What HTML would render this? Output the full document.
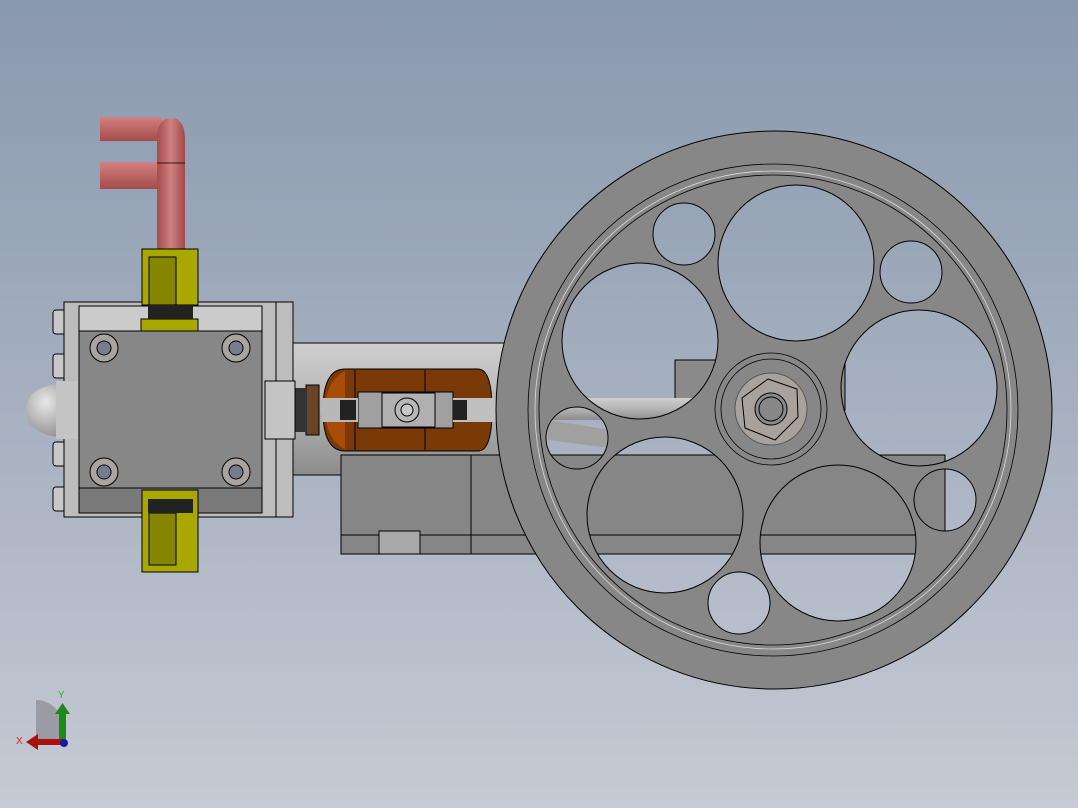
<!DOCTYPE html>
<html><head><style>
html,body{margin:0;padding:0;}
body{width:1078px;height:808px;overflow:hidden;background:linear-gradient(#8999ae 0%,#a6b0c0 50%,#c6cad4 100%);font-family:"Liberation Sans",sans-serif;}
svg{display:block;}
</style></head><body>
<svg width="1078" height="808" viewBox="0 0 1078 808" xmlns="http://www.w3.org/2000/svg">
<defs>
<linearGradient id="tube" x1="0" y1="0" x2="0" y2="1"><stop offset="0" stop-color="#cfcfcf"/><stop offset="0.5" stop-color="#b4b4b4"/><stop offset="1" stop-color="#8c8c8c"/></linearGradient>
<linearGradient id="pipe" x1="0" y1="0" x2="0" y2="1"><stop offset="0" stop-color="#d48080"/><stop offset="1" stop-color="#a44c4c"/></linearGradient>
<linearGradient id="pipev" x1="0" y1="0" x2="1" y2="0"><stop offset="0" stop-color="#a44c4c"/><stop offset="0.5" stop-color="#d08080"/><stop offset="1" stop-color="#a04a4a"/></linearGradient>
<radialGradient id="dome" cx="0.4" cy="0.35" r="0.7"><stop offset="0" stop-color="#e8e8e8"/><stop offset="1" stop-color="#8e8e8e"/></radialGradient>
</defs>
<g stroke="#000" stroke-width="1">
<rect x="100" y="117" width="62" height="24" fill="url(#pipe)" stroke="none"/>
<rect x="100" y="162" width="62" height="27" fill="url(#pipe)" stroke="none"/>
<path d="M157 250 V140 Q157 118 171 118 Q185 118 185 140 V250 Z" fill="url(#pipev)" stroke="none"/>
<line x1="157" y1="163" x2="185" y2="163" stroke-width="0.8"/>
<rect x="293" y="343" width="220" height="132" fill="url(#tube)"/>
<rect x="341" y="455" width="604" height="99" fill="#868686"/>
<line x1="341" y1="535" x2="945" y2="535"/>
<line x1="471" y1="455" x2="471" y2="554"/>
<rect x="379" y="531" width="41" height="23" fill="#a8a8a8"/>
<rect x="675" y="360" width="170" height="50" fill="#8a8a8a"/>
<rect x="490" y="398" width="215" height="22" fill="url(#tube)" stroke="none"/>
<path d="M548 420 L610 430 L610 448 L548 440 Z" fill="#a0a0a0" stroke="none"/>
<path d="M345 369 H478 Q492 369 492 410 Q492 451 478 451 H345 Q323 451 323 410 Q323 369 345 369 Z" fill="#7a3a08"/>
<path d="M345 371 Q326 380 325 410 Q326 440 345 449 Z" fill="#a84c08" stroke="none"/>
<line x1="355" y1="370" x2="355" y2="450"/>
<line x1="425" y1="370" x2="425" y2="450"/>
<rect x="358" y="392" width="95" height="36" fill="#a0a0a0"/>
<rect x="382" y="393" width="53" height="34" fill="#b0b0b0"/>
<circle cx="407" cy="410" r="12" fill="#b8b8b8"/><circle cx="407" cy="410" r="6" fill="#c8c8c8"/>
<rect x="322" y="398" width="36" height="24" fill="#b8b8b8" stroke="none"/>
<rect x="453" y="398" width="60" height="24" fill="#c0c0c0" stroke="none"/>
<rect x="340" y="400" width="16" height="20" fill="#222" stroke="none"/>
<rect x="453" y="400" width="14" height="20" fill="#222" stroke="none"/>
<rect x="306" y="385" width="13" height="50" fill="#6a4424"/>
<rect x="293" y="388" width="14" height="44" fill="#333" stroke="none"/>
<rect x="53" y="310" width="14" height="24" rx="3" fill="#c8c8c8"/>
<rect x="53" y="354" width="14" height="24" rx="3" fill="#c8c8c8"/>
<rect x="53" y="442" width="14" height="24" rx="3" fill="#c8c8c8"/>
<rect x="53" y="487" width="14" height="24" rx="3" fill="#c8c8c8"/>
<path d="M75 383 Q26 383 26 410 Q26 438 75 438 Z" fill="url(#dome)" stroke="none"/>
<rect x="64" y="302" width="229" height="215" fill="#bdbdbd"/>
<rect x="79" y="306" width="183" height="25" fill="#cbcbcb"/>
<rect x="79" y="488" width="183" height="25" fill="#7a7a7a"/>
<rect x="79" y="331" width="183" height="157" fill="#878787"/>
<line x1="276" y1="302" x2="276" y2="517"/>
<rect x="56" y="381" width="22" height="58" fill="#c4c4c4" stroke="none"/>
<rect x="265" y="381" width="30" height="58" fill="#c4c4c4"/>
<g fill="#a9a49f"><circle cx="104" cy="348" r="14"/><circle cx="236" cy="348" r="14"/><circle cx="104" cy="472" r="14"/><circle cx="236" cy="472" r="14"/></g>
<g fill="#767d8e"><circle cx="104" cy="348" r="7"/><circle cx="236" cy="348" r="7"/><circle cx="104" cy="472" r="7"/><circle cx="236" cy="472" r="7"/></g>
<rect x="142" y="249" width="56" height="56" fill="#a8a800"/>
<rect x="149" y="257" width="27" height="48" fill="#858500"/>
<rect x="141" y="319" width="57" height="12" fill="#a8a800"/>
<rect x="148" y="305" width="45" height="14" fill="#222" stroke="none"/>
<rect x="142" y="490" width="56" height="82" fill="#a8a800"/>
<rect x="149" y="513" width="27" height="52" fill="#858500"/>
<rect x="148" y="499" width="45" height="14" fill="#222" stroke="none"/>
</g>
<path fill-rule="evenodd" fill="#878787" stroke="#000" stroke-width="1" d="
M1052 410 A278 279 0 1 0 496 410 A278 279 0 1 0 1052 410 Z
M874 263 A78 78 0 1 0 718 263 A78 78 0 1 0 874 263 Z
M718 341 A78 78 0 1 0 562 341 A78 78 0 1 0 718 341 Z
M997 388 A78 78 0 1 0 841 388 A78 78 0 1 0 997 388 Z
M743 515 A78 78 0 1 0 587 515 A78 78 0 1 0 743 515 Z
M916 543 A78 78 0 1 0 760 543 A78 78 0 1 0 916 543 Z
M715 234 A31 31 0 1 0 653 234 A31 31 0 1 0 715 234 Z
M942 272 A31 31 0 1 0 880 272 A31 31 0 1 0 942 272 Z
M976 500 A31 31 0 1 0 914 500 A31 31 0 1 0 976 500 Z
M770 603 A31 31 0 1 0 708 603 A31 31 0 1 0 770 603 Z
M608 438 A31 31 0 1 0 546 438 A31 31 0 1 0 608 438 Z"/>
<g fill="none" stroke="#000" stroke-width="0.8">
<ellipse cx="773" cy="410" rx="245" ry="246"/>
<ellipse cx="773" cy="410" rx="238" ry="239" stroke="#ddd"/>
<ellipse cx="773" cy="410" rx="234" ry="235"/>
<circle cx="771" cy="409" r="56"/><circle cx="771" cy="409" r="50"/>
</g>
<circle cx="771" cy="409" r="36" fill="#a9a29c" stroke="#555"/>
<path d="M768 379 L797 389 L798 417 L775 440 L745 428 L742 398 Z" fill="#a9a29c" stroke="#000"/>
<circle cx="771" cy="409" r="16" fill="#8a8a8a" stroke="#000"/>
<circle cx="771" cy="409" r="12" fill="#878787" stroke="#000"/>
<path d="M36 700 A27 27 0 0 1 63 727 V742 H36 Z" fill="#9a9ca4"/>
<rect x="59" y="712" width="7" height="32" fill="#1a8a1a"/>
<path d="M55 714 L62.5 703 L70 714 Z" fill="#1a8a1a"/>
<rect x="36" y="739" width="28" height="6" fill="#aa1010"/>
<path d="M38 734 L26 742 L38 750 Z" fill="#aa1010"/>
<circle cx="64" cy="743" r="4" fill="#1a1aa0"/>
<text x="58" y="698" font-size="10" fill="#20c020">Y</text>
<text x="16" y="744" font-size="10" fill="#e02020">X</text>
</svg>
</body></html>
